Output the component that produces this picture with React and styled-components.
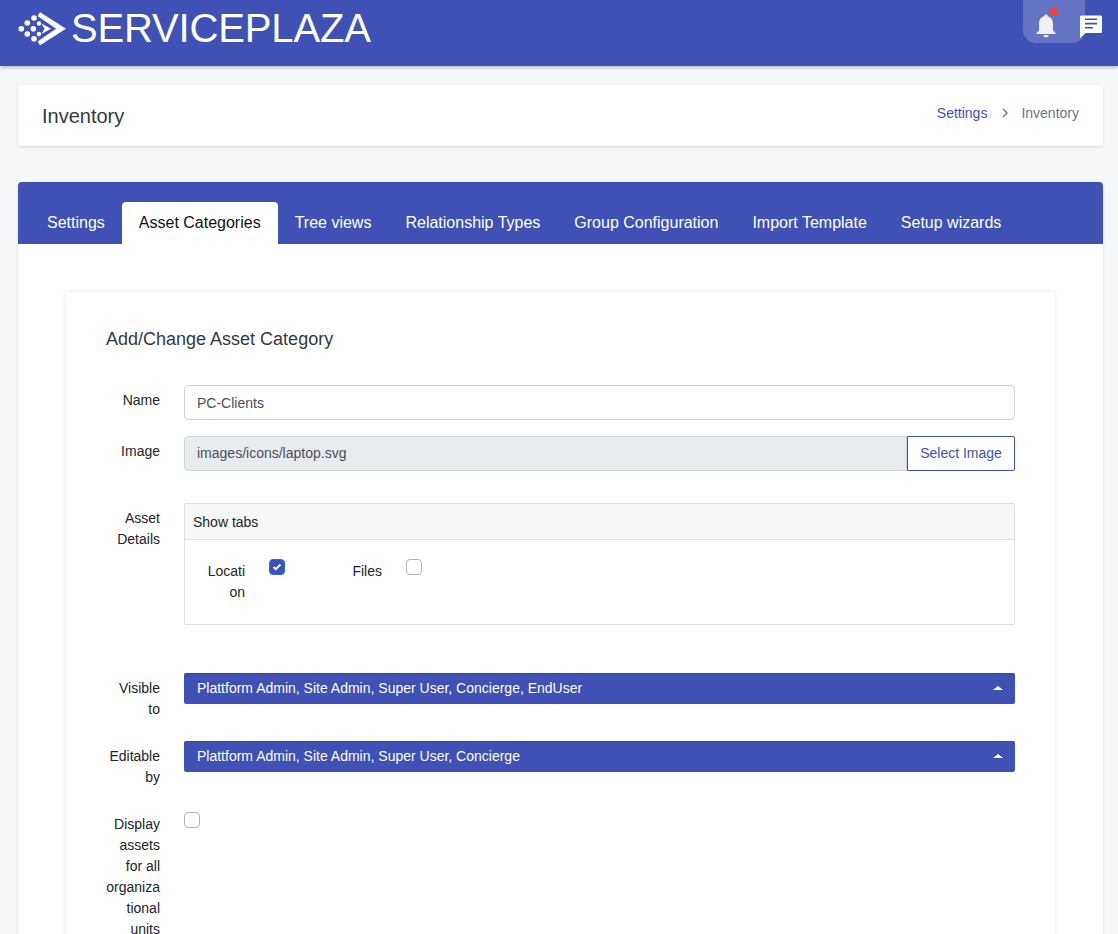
import React from 'react';
import styled, { createGlobalStyle } from 'styled-components';

const Global = createGlobalStyle`
  html, body { margin: 0; padding: 0; background: #f7f8fa; overflow: hidden; }
  body { font-family: "Liberation Sans", Arial, sans-serif; font-size: 14px; color: #212529; }
  * { box-sizing: border-box; }
`;
const Page = styled.div`height: 934px; overflow: hidden; display: flex; flex-direction: column;`;
const Header = styled.header`
  flex: none; height: 66px; background: #3f51b5; box-shadow: 0 1px 4px rgba(0,0,0,.35);
  display: flex; align-items: flex-start; padding-left: 18px; position: relative;
`;
const Brand = styled.div`display: flex; align-items: center; gap: 5px; height: 56px;`;
const BrandName = styled.span`font-size: 40px; color: #fff; letter-spacing: -0.15px; line-height: 56px;`;
const Actions = styled.div`margin-left: auto; display: flex; align-items: flex-start;`;
const BellBox = styled.div`
  width: 62px; height: 43px; background: rgba(255,255,255,.2); border-radius: 0 0 13px 13px;
  padding: 13px 0 0 11px; position: relative; margin-right: -6px;
`;
const Dot = styled.span`position: absolute; width: 8px; height: 8px; border-radius: 50%; background: #f44336; left: 27px; top: 8px;`;
const ChatBox = styled.div`width: 39px; height: 43px; padding: 14px 0 0 0;`;
const Main = styled.main`padding: 19px 15px 0 18px; flex: 1; display: flex; flex-direction: column;`;
const TitleCard = styled.section`
  height: 61px; background: #fff; border-radius: 2px; box-shadow: 0 1px 3px rgba(0,0,0,.13);
  display: flex; justify-content: space-between; padding: 0 24px; align-items: flex-start;
`;
const Title = styled.h1`margin: 0; font-size: 20px; font-weight: 400; line-height: 62px; color: #343a40;`;
const Crumbs = styled.nav`display: flex; align-items: center; height: 56px; font-size: 14px; color: #6c757d;`;
const CrumbLink = styled.span`color: #3f51b5;`;
const CrumbSep = styled.span`margin: 0 12px 0 14px; display: flex;`;
const TabCard = styled.section`
  margin-top: 36px; flex: 1; background: #fff; border-radius: 4px 4px 0 0; box-shadow: 0 1px 3px rgba(0,0,0,.13);
  display: flex; flex-direction: column;
`;
const TabBar = styled.div`
  flex: none; height: 62px; background: #3f51b5; border-radius: 4px 4px 0 0; padding: 20px 0 0 12px; display: flex;
`;
const Tab = styled.div`
  height: 42px; padding: 0 17px; line-height: 41px; font-size: 16px; white-space: nowrap;
  color: ${p => (p.$active ? '#111' : '#fff')};
  background: ${p => (p.$active ? '#fff' : 'transparent')};
  border-radius: 4px 4px 0 0;
`;
const TabBody = styled.div`flex: 1; padding: 48px 48px 0; overflow: hidden;`;
const FormCard = styled.div`
  width: 989px; height: 700px; background: #fff; box-shadow: 0 0 5px rgba(0,0,0,.1); border-radius: 2px;
  padding: 35px 40px 0;
`;
const FormTitle = styled.h2`margin: 0 0 34px; font-size: 18px; font-weight: 400; line-height: 24px; color: #343a40;`;
const Row = styled.div`
  display: grid; grid-template-columns: 54px 831px; column-gap: 24px; margin-bottom: ${p => p.$mb ?? 16}px;
`;
const Label = styled.label`
  text-align: right; font-size: 14px; line-height: 21px; padding-top: 5px; color: #212529;
  word-break: break-word;
`;
const Input = styled.div`
  height: 35px; flex: 1; border: 1px solid #ced4da; border-radius: ${p => (p.$joined ? '4px 0 0 4px' : '4px')};
  background: ${p => (p.$disabled ? '#e9ecef' : '#fff')}; padding: 0 12px; line-height: ${p => (p.$disabled ? 33 : 34)}px; font-size: 14px; color: #495057;
`;
const Group = styled.div`display: flex;`;
const OutlineButton = styled.button`
  width: 108px; height: 35px; margin: 0; padding: 0 0 2px; background: #fff; border: 1px solid #3f51b5;
  border-radius: 0 2px 2px 0; color: #3f51b5; font: 14px "Liberation Sans", Arial, sans-serif;
`;
const Panel = styled.div`height: 122px; border: 1px solid #dfdfdf; border-radius: 2px;`;
const PanelHead = styled.div`height: 36px; background: #f7f7f7; border-bottom: 1px solid #dfdfdf; padding: 0 8px; line-height: 36px; font-size: 14px;`;
const PanelBody = styled.div`display: grid; grid-template-columns: repeat(2, 137px); padding-top: 21px;`;
const PanelItem = styled.div`display: grid; grid-template-columns: 60px 16px; column-gap: 24px; align-items: start;`;
const CheckLabel = styled.span`text-align: right; line-height: 21px; font-size: 14px;`;
const Check = styled.span`
  display: flex; align-items: center; justify-content: center; width: 16px; height: 16px; border-radius: 4px;
  background: ${p => (p.$on ? '#3f51b5' : '#fff')};
  border: 1px solid ${p => (p.$on ? '#2a6fe0' : '#adb5bd')};
  margin-top: ${p => p.$mt ?? 0}px;
`;
const Multi = styled.div`
  height: 31px; background: #3f51b5; border-top: 1px solid #36469f; border-radius: 2px; color: #fff; font-size: 14px;
  padding: 0 13px 2px; line-height: 27px; display: flex; justify-content: space-between; align-items: center;
`;
const Caret = styled.span`width: 0; height: 0; border-left: 5px solid transparent; border-right: 5px solid transparent; border-bottom: 4px solid #fff; margin-right: -1px;`;

const Logo = () => (
  <svg width="48" height="34" viewBox="0 0 48 34" fill="#fff">
    <path d="M22 1.500 L47.500 17.700 L22 34 L20 30.500 L38.500 17.700 L20 5Z" stroke="#fff" strokeWidth="0.6" strokeLinejoin="round"/>
    <path d="M23.500 12.500 L33 17.700 L23.500 23 L26.500 17.700Z"/>
    <circle cx="3.300" cy="17.700" r="2.800"/><circle cx="9.300" cy="12" r="2.800"/><circle cx="9.300" cy="23" r="2.800"/>
    <circle cx="16" cy="7" r="2.800"/><circle cx="15.300" cy="17.700" r="2.800"/><circle cx="16" cy="27.700" r="2.800"/>
    <circle cx="21" cy="12.500" r="2.200"/><circle cx="21" cy="23" r="2.200"/>
  </svg>
);
const Bell = () => (
  <svg width="24" height="26" viewBox="0 0 24 26" fill="#eef0f5">
    <path d="M12 1.500c1 0 1.700.7 1.800 1.700 3.600 1 5.200 4 5.200 7.800v6.500l2.600 2.400v1H2.400v-1L5 17.500V11c0-3.800 1.600-6.800 5.200-7.800.1-1 .8-1.700 1.800-1.700z"/>
    <path d="M9.500 22h5a2.500 2.500 0 0 1-5 0z"/>
  </svg>
);
const Chat = () => (
  <svg width="24" height="25" viewBox="0 0 24 25">
    <path d="M2.500 1.500H21.500a1.500 1.500 0 0 1 1.500 1.500V17.500a1.500 1.500 0 0 1-1.500 1.500H6.500L1 24V3a1.500 1.500 0 0 1 1.500-1.500z" fill="#fff"/>
    <path d="M6 4.500h12v1.600H6zM6 8.800h12v1.600H6zM6 13h8v1.600H6z" fill="#3f51b5"/>
  </svg>
);

const tabs = ['Settings', 'Asset Categories', 'Tree views', 'Relationship Types', 'Group Configuration', 'Import Template', 'Setup wizards'];

export default function App() {
  return (
    <Page>
      <Global />
      <Header>
        <Brand><Logo /><BrandName>SERVICEPLAZA</BrandName></Brand>
        <Actions>
          <BellBox><Bell /><Dot /></BellBox>
          <ChatBox><Chat /></ChatBox>
        </Actions>
      </Header>
      <Main>
        <TitleCard>
          <Title>Inventory</Title>
          <Crumbs>
            <CrumbLink>Settings</CrumbLink>
            <CrumbSep>
              <svg width="8" height="10" viewBox="0 0 8 10" fill="none" stroke="#6c757d" strokeWidth="1.300"><path d="M2 1l4 4-4 4" /></svg>
            </CrumbSep>
            Inventory
          </Crumbs>
        </TitleCard>
        <TabCard>
          <TabBar>
            {tabs.map(t => <Tab key={t} $active={t === 'Asset Categories'}>{t}</Tab>)}
          </TabBar>
          <TabBody>
            <FormCard>
              <FormTitle>Add/Change Asset Category</FormTitle>
              <Row $mb={16}>
                <Label>Name</Label>
                <Input>PC-Clients</Input>
              </Row>
              <Row $mb={32}>
                <Label>Image</Label>
                <Group>
                  <Input $disabled $joined>images/icons/laptop.svg</Input>
                  <OutlineButton>Select Image</OutlineButton>
                </Group>
              </Row>
              <Row $mb={48}>
                <Label>Asset Details</Label>
                <Panel>
                  <PanelHead>Show tabs</PanelHead>
                  <PanelBody>
                    <PanelItem>
                      <CheckLabel>Locati<br />on</CheckLabel>
                      <Check $on $mt={-2}><svg width="10" height="8" viewBox="0 0 10 8" fill="none" stroke="#fff" strokeWidth="2"><path d="M1.500 4l2.300 2.200L8.500 1.500" /></svg></Check>
                    </PanelItem>
                    <PanelItem>
                      <CheckLabel>Files</CheckLabel>
                      <Check $mt={-2} />
                    </PanelItem>
                  </PanelBody>
                </Panel>
              </Row>
              <Row $mb={21}>
                <Label>Visible to</Label>
                <Multi>Plattform Admin, Site Admin, Super User, Concierge, EndUser<Caret /></Multi>
              </Row>
              <Row $mb={21}>
                <Label>Editable by</Label>
                <Multi>Plattform Admin, Site Admin, Super User, Concierge<Caret /></Multi>
              </Row>
              <Row>
                <Label>Display assets for all organiza tional units</Label>
                <div><Check $mt={3} /></div>
              </Row>
            </FormCard>
          </TabBody>
        </TabCard>
      </Main>
    </Page>
  );
}
